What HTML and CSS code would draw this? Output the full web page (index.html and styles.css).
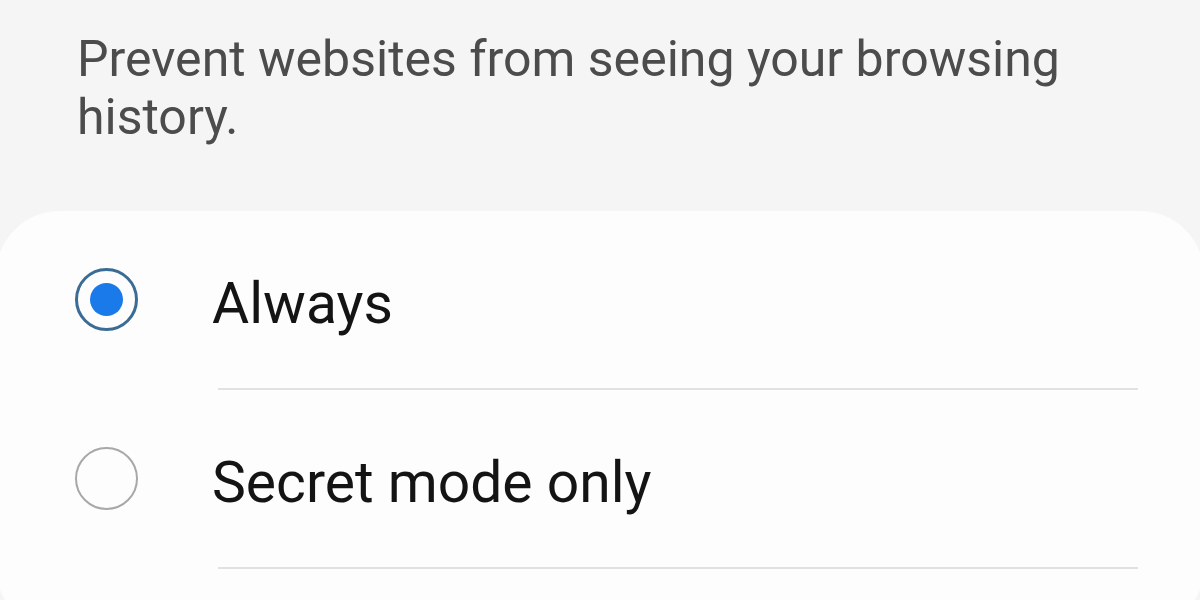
FILE: index.html
```html
<!DOCTYPE html>
<html lang="en">
<head>
  <meta charset="UTF-8">
  <meta name="viewport" content="width=device-width, initial-scale=1.0">
  <title>Anti-tracking</title>
  <link rel="stylesheet" href="styles.css">
</head>
<body>
  <p class="description">Prevent websites from seeing your browsing history.</p>

  <div class="card">
    <label class="option">
      <span class="radio checked"><span class="dot"></span></span>
      <span class="option-label">Always</span>
    </label>
    <div class="divider"></div>
    <label class="option">
      <span class="radio"></span>
      <span class="option-label">Secret mode only</span>
    </label>
    <div class="divider"></div>
  </div>
</body>
</html>
```

FILE: styles.css
```css
body {
  margin: 0;
  background: #f5f5f5;
  font-family: Roboto, "Liberation Sans", sans-serif;
  overflow: hidden;
}

.description {
  margin: 0;
  padding: 30px 120px 0 77px;
  font-size: 50px;
  line-height: 58px;
  color: #4c4c4c;
}

.card {
  background: #fdfdfd;
  margin: 65px -4px 0 -4px;
  border-radius: 64px;
  min-height: 420px;
}

.option {
  display: flex;
  align-items: center;
  height: 177px;
  padding-left: 79px;
}

.radio {
  box-sizing: border-box;
  width: 63px;
  height: 63px;
  border: 2px solid #a8a8a8;
  border-radius: 50%;
  display: flex;
  align-items: center;
  justify-content: center;
  flex-shrink: 0;
  margin-right: 74px;
}

.radio.checked {
  border: 3px solid #3a6c96;
}

.dot {
  width: 33px;
  height: 33px;
  border-radius: 50%;
  background: #1a7aea;
}

.option-label {
  font-size: 57px;
  color: #141414;
  margin-top: 8px;
}

.divider {
  height: 2px;
  background: #e2e2e2;
  margin: 0 66px 0 222px;
}
```
